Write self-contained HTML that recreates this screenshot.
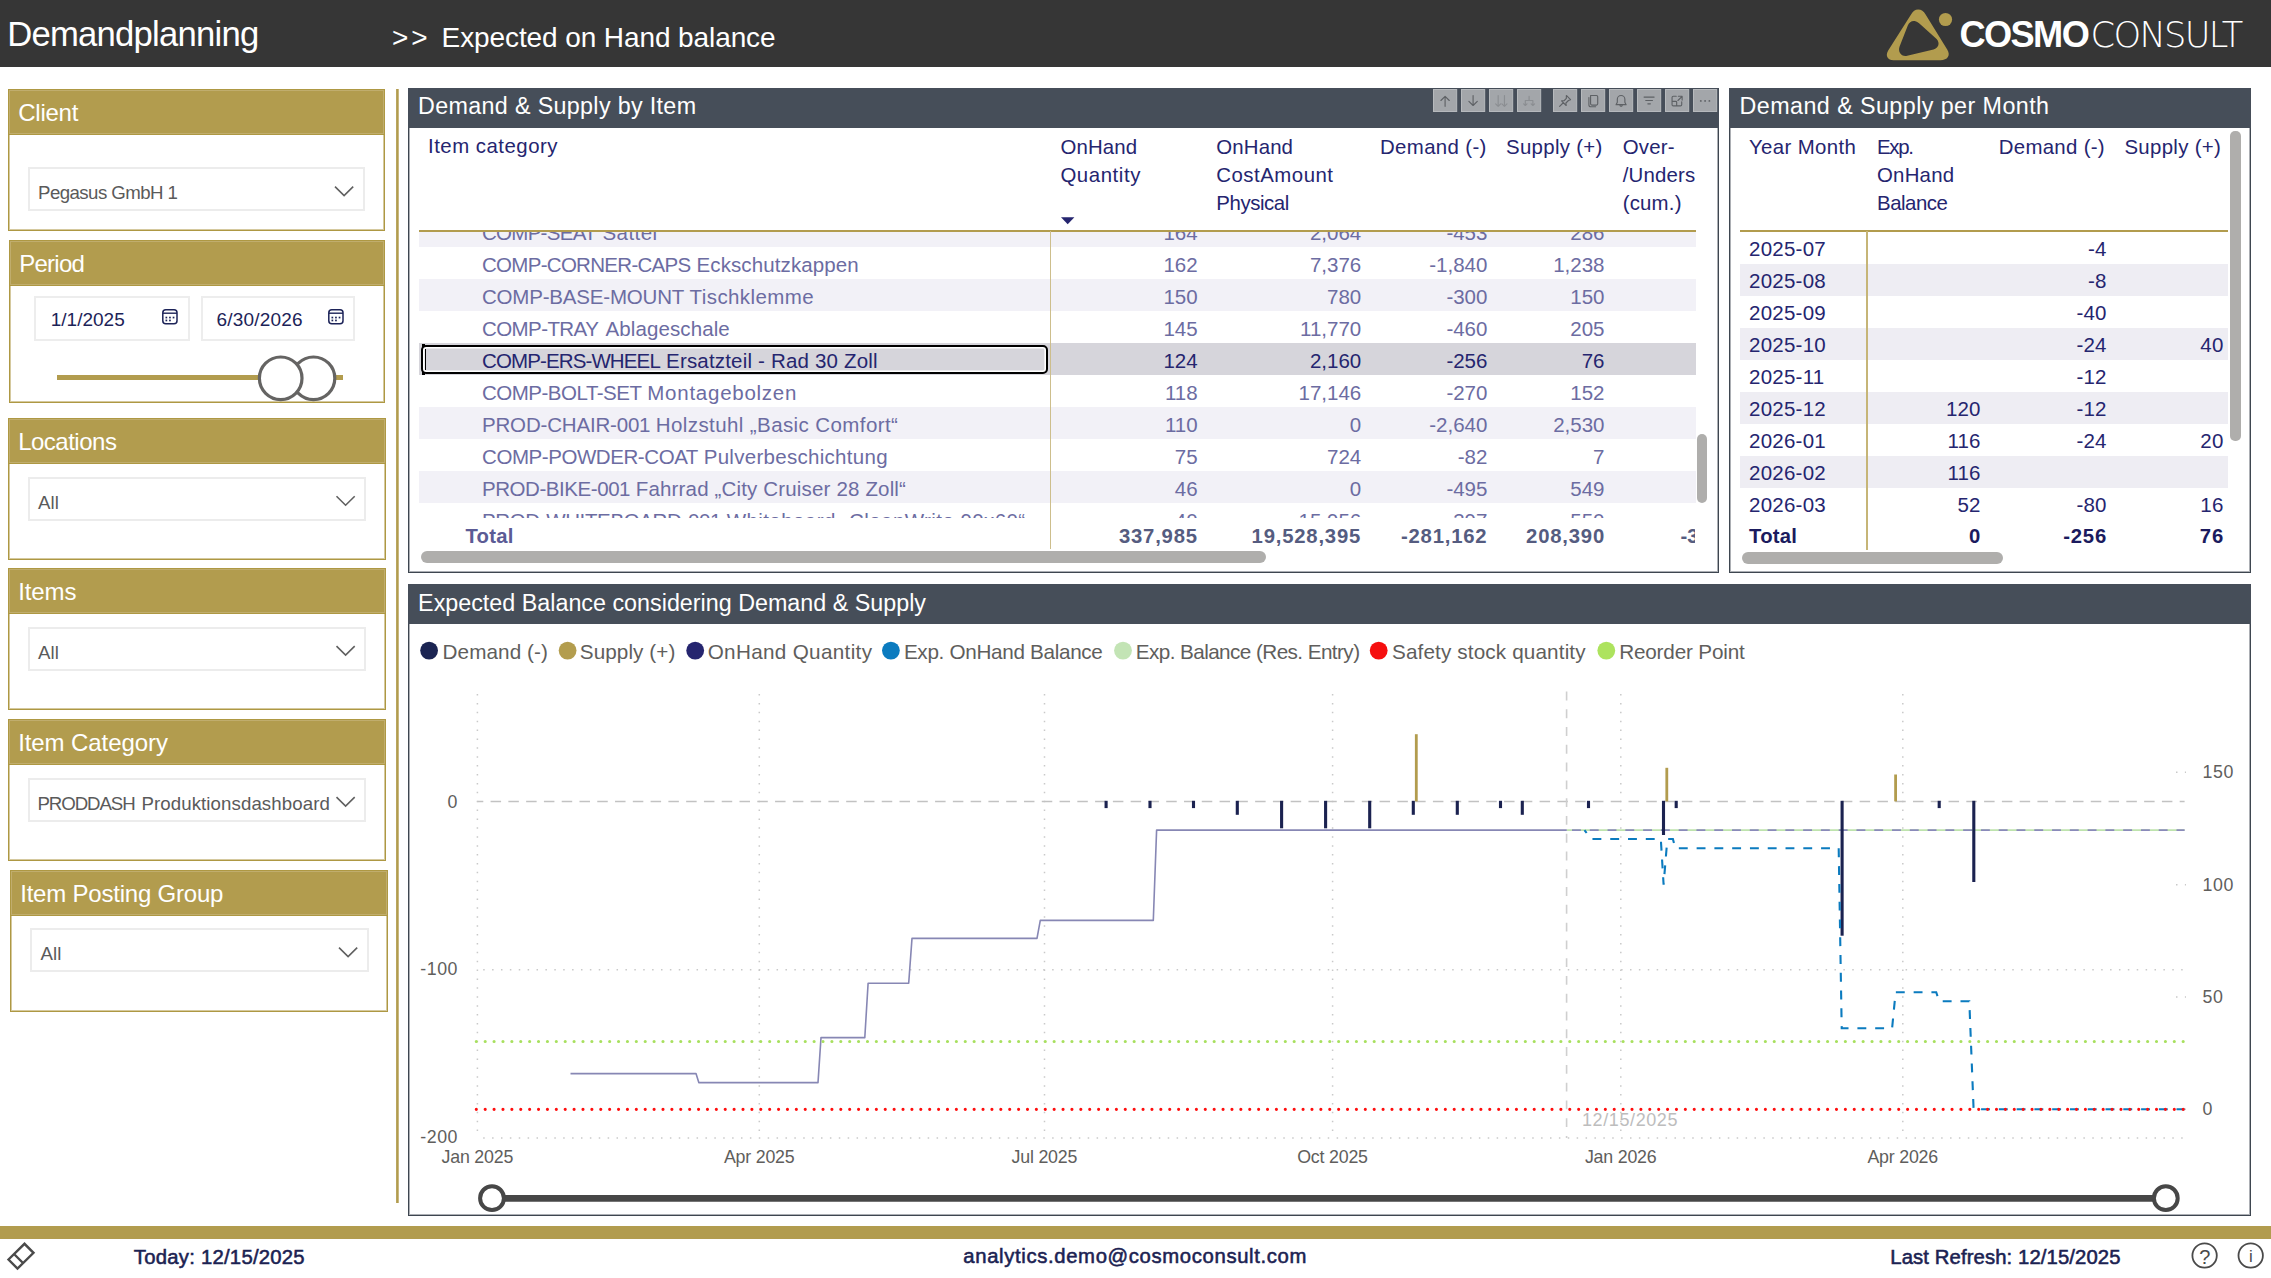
<!DOCTYPE html>
<html><head><meta charset="utf-8"><title>Demandplanning - Expected on Hand balance</title>
<style>
html,body{margin:0;padding:0;background:#fff;}
body{width:2271px;height:1278px;position:relative;overflow:hidden;font-family:"Liberation Sans",sans-serif;}
.t{position:absolute;white-space:nowrap;}
.b{position:absolute;box-sizing:border-box;}
svg{position:absolute;overflow:visible;}
</style></head><body>

<div class="b" style="left:0px;top:0px;width:2271px;height:66.5px;background:#363636;"></div>
<div class="t" style="top:16.90px;font-size:34.67px;line-height:34.67px;color:#fff;letter-spacing:-0.781px;left:7.30px;">Demandplanning</div>
<div class="t" style="top:23.80px;font-size:28px;line-height:28px;color:#fff;letter-spacing:3.000px;left:392.00px;">&gt;&gt;</div>
<div class="t" style="top:23.80px;font-size:28px;line-height:28px;color:#fff;letter-spacing:-0.098px;left:441.60px;">Expected on Hand balance</div>
<div class="b" style="left:8px;top:89px;width:376.5px;height:141.5px;border:1px solid #AE9843;box-shadow:inset 0 0 0 1px rgba(178,156,78,0.55);background:#fff;"></div>
<div class="b" style="left:8px;top:89px;width:376.5px;height:46px;background:#B29C4E;border:1px solid #AE9843;box-shadow:inset 0 0 0 1px rgba(255,255,255,0.18);"></div>
<div class="t" style="top:100.98px;font-size:24px;line-height:24px;color:#fff;letter-spacing:-0.232px;left:18.20px;">Client</div>
<div class="b" style="left:27.5px;top:167px;width:337px;height:44px;border:2px solid #ECECEC;background:#fff;"></div>
<div class="t" style="top:184.20px;font-size:18.67px;line-height:18.67px;color:#5A5A5A;letter-spacing:-0.566px;left:38.00px;">Pegasus GmbH 1</div>
<svg style="left:0;top:0" width="1" height="1"><path d="M335.0,186.6 L344.1,195.6 L353.20000000000005,186.6" fill="none" stroke="#606060" stroke-width="1.6"/></svg>
<div class="b" style="left:9px;top:240px;width:376px;height:163px;border:1px solid #AE9843;box-shadow:inset 0 0 0 1px rgba(178,156,78,0.55);background:#fff;"></div>
<div class="b" style="left:9px;top:240px;width:376px;height:46px;background:#B29C4E;border:1px solid #AE9843;box-shadow:inset 0 0 0 1px rgba(255,255,255,0.18);"></div>
<div class="t" style="top:251.98px;font-size:24px;line-height:24px;color:#fff;letter-spacing:-0.736px;left:19.20px;">Period</div>
<div class="b" style="left:34px;top:295.5px;width:155.5px;height:45px;border:2px solid #EDEDED;background:#fff;"></div>
<div class="b" style="left:200.5px;top:295.5px;width:154px;height:45px;border:2px solid #EDEDED;background:#fff;"></div>
<div class="t" style="top:310.12px;font-size:19px;line-height:19px;color:#1C2358;letter-spacing:0.006px;left:50.75px;">1/1/2025</div>
<div class="t" style="top:310.12px;font-size:19px;line-height:19px;color:#1C2358;letter-spacing:0.184px;left:216.50px;">6/30/2026</div>
<svg style="left:162px;top:308.6px" width="16" height="16" viewBox="0 0 16 16"><rect x="0.8" y="0.8" width="14.2" height="13.9" rx="3" fill="none" stroke="#1C2358" stroke-width="1.5"/><line x1="1" y1="4.2" x2="15" y2="4.2" stroke="#1C2358" stroke-width="1.4"/><rect x="3.5" y="7.7" width="1.7" height="1.7" fill="#1C2358"/><rect x="7.1" y="7.7" width="1.7" height="1.7" fill="#1C2358"/><rect x="10.7" y="7.7" width="1.7" height="1.7" fill="#1C2358"/><rect x="3.5" y="10.6" width="1.7" height="1.7" fill="#1C2358"/><rect x="7.1" y="10.6" width="1.7" height="1.7" fill="#1C2358"/></svg>
<svg style="left:328.1px;top:308.6px" width="16" height="16" viewBox="0 0 16 16"><rect x="0.8" y="0.8" width="14.2" height="13.9" rx="3" fill="none" stroke="#1C2358" stroke-width="1.5"/><line x1="1" y1="4.2" x2="15" y2="4.2" stroke="#1C2358" stroke-width="1.4"/><rect x="3.5" y="7.7" width="1.7" height="1.7" fill="#1C2358"/><rect x="7.1" y="7.7" width="1.7" height="1.7" fill="#1C2358"/><rect x="10.7" y="7.7" width="1.7" height="1.7" fill="#1C2358"/><rect x="3.5" y="10.6" width="1.7" height="1.7" fill="#1C2358"/><rect x="7.1" y="10.6" width="1.7" height="1.7" fill="#1C2358"/></svg>
<div class="b" style="left:56.75px;top:374.6px;width:286px;height:5.2px;background:#B29C4E;"></div>
<svg style="left:0;top:0" width="1" height="1"><circle cx="313.5" cy="378.3" r="21.3" fill="#fff" stroke="#656463" stroke-width="3.2"/><circle cx="280.7" cy="378.3" r="21.3" fill="#fff" stroke="#656463" stroke-width="3.2"/></svg>
<div class="b" style="left:8px;top:418px;width:377.5px;height:141.5px;border:1px solid #AE9843;box-shadow:inset 0 0 0 1px rgba(178,156,78,0.55);background:#fff;"></div>
<div class="b" style="left:8px;top:418px;width:377.5px;height:46px;background:#B29C4E;border:1px solid #AE9843;box-shadow:inset 0 0 0 1px rgba(255,255,255,0.18);"></div>
<div class="t" style="top:429.98px;font-size:24px;line-height:24px;color:#fff;letter-spacing:-0.505px;left:18.20px;">Locations</div>
<div class="b" style="left:27.5px;top:476.6px;width:338.5px;height:44.3px;border:2px solid #ECECEC;background:#fff;"></div>
<div class="t" style="top:493.80px;font-size:18.67px;line-height:18.67px;color:#5A5A5A;letter-spacing:0.125px;left:38.00px;">All</div>
<svg style="left:0;top:0" width="1" height="1"><path d="M336.5,496.20000000000005 L345.6,505.20000000000005 L354.70000000000005,496.20000000000005" fill="none" stroke="#606060" stroke-width="1.6"/></svg>
<div class="b" style="left:8px;top:568px;width:377.5px;height:141.6px;border:1px solid #AE9843;box-shadow:inset 0 0 0 1px rgba(178,156,78,0.55);background:#fff;"></div>
<div class="b" style="left:8px;top:568px;width:377.5px;height:46px;background:#B29C4E;border:1px solid #AE9843;box-shadow:inset 0 0 0 1px rgba(255,255,255,0.18);"></div>
<div class="t" style="top:579.98px;font-size:24px;line-height:24px;color:#fff;letter-spacing:-0.119px;left:18.20px;">Items</div>
<div class="b" style="left:27.5px;top:626.5px;width:338.5px;height:44.4px;border:2px solid #ECECEC;background:#fff;"></div>
<div class="t" style="top:643.70px;font-size:18.67px;line-height:18.67px;color:#5A5A5A;letter-spacing:0.125px;left:38.00px;">All</div>
<svg style="left:0;top:0" width="1" height="1"><path d="M336.5,646.1 L345.6,655.1 L354.70000000000005,646.1" fill="none" stroke="#606060" stroke-width="1.6"/></svg>
<div class="b" style="left:8px;top:719px;width:377.5px;height:141.6px;border:1px solid #AE9843;box-shadow:inset 0 0 0 1px rgba(178,156,78,0.55);background:#fff;"></div>
<div class="b" style="left:8px;top:719px;width:377.5px;height:46px;background:#B29C4E;border:1px solid #AE9843;box-shadow:inset 0 0 0 1px rgba(255,255,255,0.18);"></div>
<div class="t" style="top:730.98px;font-size:24px;line-height:24px;color:#fff;letter-spacing:-0.086px;left:18.20px;">Item Category</div>
<div class="b" style="left:27.5px;top:777.5px;width:338.5px;height:44.4px;border:2px solid #ECECEC;background:#fff;"></div>
<div class="t" style="top:794.90px;font-size:18.67px;line-height:18.67px;color:#5A5A5A;letter-spacing:-1.074px;left:37.50px;">PRODDASH</div>
<div class="t" style="top:794.90px;font-size:18.67px;line-height:18.67px;color:#5A5A5A;letter-spacing:0.093px;left:141.40px;">Produktionsdashboard</div>
<svg style="left:0;top:0" width="1" height="1"><path d="M336.5,797.1 L345.6,806.1 L354.70000000000005,797.1" fill="none" stroke="#606060" stroke-width="1.6"/></svg>
<div class="b" style="left:10px;top:870px;width:378px;height:141.6px;border:1px solid #AE9843;box-shadow:inset 0 0 0 1px rgba(178,156,78,0.55);background:#fff;"></div>
<div class="b" style="left:10px;top:870px;width:378px;height:46px;background:#B29C4E;border:1px solid #AE9843;box-shadow:inset 0 0 0 1px rgba(255,255,255,0.18);"></div>
<div class="t" style="top:881.98px;font-size:24px;line-height:24px;color:#fff;letter-spacing:-0.210px;left:20.20px;">Item Posting Group</div>
<div class="b" style="left:30px;top:928px;width:338.5px;height:44.4px;border:2px solid #ECECEC;background:#fff;"></div>
<div class="t" style="top:945.20px;font-size:18.67px;line-height:18.67px;color:#5A5A5A;letter-spacing:0.125px;left:40.50px;">All</div>
<svg style="left:0;top:0" width="1" height="1"><path d="M339.0,947.6 L348.1,956.6 L357.20000000000005,947.6" fill="none" stroke="#606060" stroke-width="1.6"/></svg>
<svg style="left:0;top:0" width="1" height="1"><rect x="396.1" y="89" width="2.6" height="1114" fill="#B29C4E"/></svg>
<div class="b" style="left:407.5px;top:88.3px;width:1311px;height:485px;border:1px solid #3E4650;box-shadow:inset 0 0 0 1px rgba(70,78,89,0.45);background:#fff;"></div>
<div class="b" style="left:407.5px;top:88.3px;width:1311px;height:40px;background:#464E59;"></div>
<div class="t" style="top:95.48px;font-size:23.3px;line-height:23.3px;color:#fff;letter-spacing:0.333px;left:418.10px;">Demand &amp; Supply by Item</div>
<div class="b" style="left:1729px;top:88.3px;width:522.3px;height:485px;border:1px solid #3E4650;box-shadow:inset 0 0 0 1px rgba(70,78,89,0.45);background:#fff;"></div>
<div class="b" style="left:1729px;top:88.3px;width:522.3px;height:40px;background:#464E59;"></div>
<div class="t" style="top:95.48px;font-size:23.3px;line-height:23.3px;color:#fff;letter-spacing:0.430px;left:1739.60px;">Demand &amp; Supply per Month</div>
<div class="b" style="left:407.5px;top:584.3px;width:1843.8px;height:632px;border:1px solid #3E4650;box-shadow:inset 0 0 0 1px rgba(70,78,89,0.45);background:#fff;"></div>
<div class="b" style="left:407.5px;top:584.3px;width:1843.8px;height:40px;background:#464E59;"></div>
<div class="t" style="top:592.08px;font-size:23.3px;line-height:23.3px;color:#fff;letter-spacing:0.006px;left:418.10px;">Expected Balance considering Demand &amp; Supply</div>
<svg style="left:1433px;top:89.1px" width="24.2" height="23" viewBox="0 0 24.2 23"><rect x="0.5" y="0.5" width="23.2" height="22" fill="#A3A6AA" stroke="#B7BABD" stroke-width="1"/><g transform="translate(12.1,11.9) scale(0.84) translate(-12,-12)"><path fill="none" stroke="#5E6165" stroke-width="1.35" stroke-linecap="round" stroke-linejoin="round" d="M12 18.5V6.5M7 11.5l5-5 5 5"/></g></svg>
<svg style="left:1460.9px;top:89.1px" width="24.2" height="23" viewBox="0 0 24.2 23"><rect x="0.5" y="0.5" width="23.2" height="22" fill="#A3A6AA" stroke="#B7BABD" stroke-width="1"/><g transform="translate(12.1,11.9) scale(0.84) translate(-12,-12)"><path fill="none" stroke="#5E6165" stroke-width="1.35" stroke-linecap="round" stroke-linejoin="round" d="M12 5.5v12M7 12.5l5 5 5-5"/></g></svg>
<svg style="left:1488.8px;top:89.1px" width="24.2" height="23" viewBox="0 0 24.2 23"><rect x="0.5" y="0.5" width="23.2" height="22" fill="#A3A6AA" stroke="#B7BABD" stroke-width="1"/><g transform="translate(12.1,11.9) scale(0.84) translate(-12,-12)"><path fill="none" stroke="#8B8E92" stroke-width="1.35" stroke-linecap="round" stroke-linejoin="round" d="M8.5 5.5v13M5.5 15.5l3 3 3-3M16 5.5v13M13 15.5l3 3 3-3"/></g></svg>
<svg style="left:1516.8px;top:89.1px" width="24.2" height="23" viewBox="0 0 24.2 23"><rect x="0.5" y="0.5" width="23.2" height="22" fill="#A3A6AA" stroke="#B7BABD" stroke-width="1"/><g transform="translate(12.1,11.9) scale(0.84) translate(-12,-12)"><path fill="none" stroke="#8B8E92" stroke-width="1.35" stroke-linecap="round" stroke-linejoin="round" d="M12 6.5v5M7.5 17.5v-6h9v6M5.5 15.5l2 2 2-2M14.5 15.5l2 2 2-2"/></g></svg>
<svg style="left:1552.8px;top:89.1px" width="24.2" height="23" viewBox="0 0 24.2 23"><rect x="0.5" y="0.5" width="23.2" height="22" fill="#A3A6AA" stroke="#B7BABD" stroke-width="1"/><g transform="translate(12.1,11.9) scale(0.84) translate(-12,-12)"><path fill="none" stroke="#5E6165" stroke-width="1.35" stroke-linecap="round" stroke-linejoin="round" d="M13.5 5.5l5 5-2.5 1-3 3 .3 3-5.5-5.5 3-.2 2.7-2.8zM9.8 14.2l-4.3 4.3"/></g></svg>
<svg style="left:1580.8px;top:89.1px" width="24.2" height="23" viewBox="0 0 24.2 23"><rect x="0.5" y="0.5" width="23.2" height="22" fill="#A3A6AA" stroke="#B7BABD" stroke-width="1"/><g transform="translate(12.1,11.9) scale(0.84) translate(-12,-12)"><path fill="none" stroke="#5E6165" stroke-width="1.35" stroke-linecap="round" stroke-linejoin="round" d="M9 5.5h7a1.5 1.5 0 0 1 1.500 1.5v8.5a1.500 1.500 0 0 1 -1.500 1.500h-5.500a1.500 1.500 0 0 1 -1.500 -1.500zM7 8v8.500a2.500 2.500 0 0 0 2.500 2.500h5.500"/></g></svg>
<svg style="left:1608.8px;top:89.1px" width="24.2" height="23" viewBox="0 0 24.2 23"><rect x="0.5" y="0.5" width="23.2" height="22" fill="#A3A6AA" stroke="#B7BABD" stroke-width="1"/><g transform="translate(12.1,11.9) scale(0.84) translate(-12,-12)"><path fill="none" stroke="#5E6165" stroke-width="1.35" stroke-linecap="round" stroke-linejoin="round" d="M12 5.5a4.500 4.500 0 0 1 4.500 4.500v3.500l1.500 3h-12l1.500-3v-3.500a4.500 4.500 0 0 1 4.500-4.500zM10.500 17a1.500 1.500 0 0 0 3 0"/></g></svg>
<svg style="left:1636.8px;top:89.1px" width="24.2" height="23" viewBox="0 0 24.2 23"><rect x="0.5" y="0.5" width="23.2" height="22" fill="#A3A6AA" stroke="#B7BABD" stroke-width="1"/><g transform="translate(12.1,11.9) scale(0.84) translate(-12,-12)"><path fill="none" stroke="#5E6165" stroke-width="1.35" stroke-linecap="round" stroke-linejoin="round" d="M6 7.500h12M8 11.500h8M10.500 15.500h3"/></g></svg>
<svg style="left:1664.7px;top:89.1px" width="24.2" height="23" viewBox="0 0 24.2 23"><rect x="0.5" y="0.5" width="23.2" height="22" fill="#A3A6AA" stroke="#B7BABD" stroke-width="1"/><g transform="translate(12.1,11.9) scale(0.84) translate(-12,-12)"><path fill="none" stroke="#5E6165" stroke-width="1.35" stroke-linecap="round" stroke-linejoin="round" d="M11 6.500h-3.500a1.500 1.500 0 0 0 -1.500 1.500v8.500a1.500 1.500 0 0 0 1.500 1.500h8.500a1.500 1.500 0 0 0 1.500-1.500v-3.500M13.500 6.500h4.500v4.500M18 6.500l-5 5M6 12.500h4.500a1 1 0 0 1 1 1v4.500"/></g></svg>
<svg style="left:1692.7px;top:89.1px" width="24.2" height="23" viewBox="0 0 24.2 23"><rect x="0.5" y="0.5" width="23.2" height="22" fill="#A3A6AA" stroke="#B7BABD" stroke-width="1"/><g transform="translate(12.1,11.9) scale(0.84) translate(-12,-12)"><circle cx="6.9" cy="12" r="1.1" fill="#5E6165"/><circle cx="12" cy="12" r="1.1" fill="#5E6165"/><circle cx="17.1" cy="12" r="1.1" fill="#5E6165"/></g></svg>
<div class="t" style="top:135.83px;font-size:20.4px;line-height:20.4px;color:#25256F;letter-spacing:0.493px;left:428.00px;">Item category</div>
<div class="t" style="top:136.63px;font-size:20.4px;line-height:20.4px;color:#25256F;letter-spacing:0.143px;left:1060.40px;">OnHand</div>
<div class="t" style="top:164.83px;font-size:20.4px;line-height:20.4px;color:#25256F;letter-spacing:0.575px;left:1060.40px;">Quantity</div>
<div class="t" style="top:136.63px;font-size:20.4px;line-height:20.4px;color:#25256F;letter-spacing:0.143px;left:1216.30px;">OnHand</div>
<div class="t" style="top:164.83px;font-size:20.4px;line-height:20.4px;color:#25256F;letter-spacing:0.505px;left:1216.30px;">CostAmount</div>
<div class="t" style="top:193.03px;font-size:20.4px;line-height:20.4px;color:#25256F;letter-spacing:-0.424px;left:1216.30px;">Physical</div>
<div class="t" style="top:136.63px;font-size:20.4px;line-height:20.4px;color:#25256F;letter-spacing:0.360px;left:1380.00px;">Demand (-)</div>
<div class="t" style="top:136.63px;font-size:20.4px;line-height:20.4px;color:#25256F;letter-spacing:0.317px;left:1506.00px;">Supply (+)</div>
<div class="b" style="left:1615px;top:130px;width:80.3px;height:99px;overflow:hidden;">
<div class="t" style="left:7.7px;top:6.63px;font-size:20.4px;line-height:20.4px;color:#25256F;letter-spacing:0.2px;">Over-</div>
<div class="t" style="left:7.7px;top:34.83px;font-size:20.4px;line-height:20.4px;color:#25256F;letter-spacing:0.2px;">/Understock</div>
<div class="t" style="left:7.7px;top:63.03px;font-size:20.4px;line-height:20.4px;color:#25256F;letter-spacing:0.2px;">(cum.)</div>
</div>
<svg style="left:1060.6px;top:217px" width="14" height="8"><path d="M0,0.3 H13.4 L6.7,7.2 Z" fill="#25256F"/></svg>
<div class="b" style="left:418.5px;top:231px;width:1277px;height:286.5px;overflow:hidden;">
<div class="b" style="left:0;top:-15.900000000000006px;width:1277px;height:32px;background:#F2F1F7;"></div>
<div class="t" style="left:63.50px;top:-8.25px;font-size:20.5px;line-height:20.5px;color:#6C6CA2;letter-spacing:-0.719px;">COMP-SEAT</div>
<div class="t" style="left:184.00px;top:-8.25px;font-size:20.5px;line-height:20.5px;color:#6C6CA2;letter-spacing:0.436px;">Sattel</div>
<div class="t" style="right:497.90px;top:-8.25px;font-size:20.5px;line-height:20.5px;color:#6C6CA2;letter-spacing:0.0px;">164</div>
<div class="t" style="right:334.30px;top:-8.25px;font-size:20.5px;line-height:20.5px;color:#6C6CA2;letter-spacing:0.0px;">2,064</div>
<div class="t" style="right:208.10px;top:-8.25px;font-size:20.5px;line-height:20.5px;color:#6C6CA2;letter-spacing:0.0px;">-453</div>
<div class="t" style="right:91.00px;top:-8.25px;font-size:20.5px;line-height:20.5px;color:#6C6CA2;letter-spacing:0.0px;">286</div>
<div class="b" style="left:0;top:16.099999999999994px;width:1277px;height:32px;background:#fff;"></div>
<div class="t" style="left:63.50px;top:23.75px;font-size:20.5px;line-height:20.5px;color:#6C6CA2;letter-spacing:-0.708px;">COMP-CORNER-CAPS</div>
<div class="t" style="left:278.00px;top:23.75px;font-size:20.5px;line-height:20.5px;color:#6C6CA2;letter-spacing:0.109px;">Eckschutzkappen</div>
<div class="t" style="right:497.90px;top:23.75px;font-size:20.5px;line-height:20.5px;color:#6C6CA2;letter-spacing:0.0px;">162</div>
<div class="t" style="right:334.30px;top:23.75px;font-size:20.5px;line-height:20.5px;color:#6C6CA2;letter-spacing:0.0px;">7,376</div>
<div class="t" style="right:208.10px;top:23.75px;font-size:20.5px;line-height:20.5px;color:#6C6CA2;letter-spacing:0.0px;">-1,840</div>
<div class="t" style="right:91.00px;top:23.75px;font-size:20.5px;line-height:20.5px;color:#6C6CA2;letter-spacing:0.0px;">1,238</div>
<div class="b" style="left:0;top:48.099999999999994px;width:1277px;height:32px;background:#F2F1F7;"></div>
<div class="t" style="left:63.50px;top:55.75px;font-size:20.5px;line-height:20.5px;color:#6C6CA2;letter-spacing:-0.193px;">COMP-BASE-MOUNT</div>
<div class="t" style="left:271.10px;top:55.75px;font-size:20.5px;line-height:20.5px;color:#6C6CA2;letter-spacing:0.412px;">Tischklemme</div>
<div class="t" style="right:497.90px;top:55.75px;font-size:20.5px;line-height:20.5px;color:#6C6CA2;letter-spacing:0.0px;">150</div>
<div class="t" style="right:334.30px;top:55.75px;font-size:20.5px;line-height:20.5px;color:#6C6CA2;letter-spacing:0.0px;">780</div>
<div class="t" style="right:208.10px;top:55.75px;font-size:20.5px;line-height:20.5px;color:#6C6CA2;letter-spacing:0.0px;">-300</div>
<div class="t" style="right:91.00px;top:55.75px;font-size:20.5px;line-height:20.5px;color:#6C6CA2;letter-spacing:0.0px;">150</div>
<div class="b" style="left:0;top:80.1px;width:1277px;height:32px;background:#fff;"></div>
<div class="t" style="left:63.50px;top:87.75px;font-size:20.5px;line-height:20.5px;color:#6C6CA2;letter-spacing:-0.585px;">COMP-TRAY</div>
<div class="t" style="left:187.00px;top:87.75px;font-size:20.5px;line-height:20.5px;color:#6C6CA2;letter-spacing:0.101px;">Ablageschale</div>
<div class="t" style="right:497.90px;top:87.75px;font-size:20.5px;line-height:20.5px;color:#6C6CA2;letter-spacing:0.0px;">145</div>
<div class="t" style="right:334.30px;top:87.75px;font-size:20.5px;line-height:20.5px;color:#6C6CA2;letter-spacing:0.0px;">11,770</div>
<div class="t" style="right:208.10px;top:87.75px;font-size:20.5px;line-height:20.5px;color:#6C6CA2;letter-spacing:0.0px;">-460</div>
<div class="t" style="right:91.00px;top:87.75px;font-size:20.5px;line-height:20.5px;color:#6C6CA2;letter-spacing:0.0px;">205</div>
<div class="b" style="left:0;top:112.1px;width:1277px;height:32px;background:#D6D5DB;"></div>
<div class="t" style="left:63.50px;top:119.75px;font-size:20.5px;line-height:20.5px;color:#25256F;letter-spacing:-0.878px;">COMP-ERS-WHEEL</div>
<div class="t" style="left:247.60px;top:119.75px;font-size:20.5px;line-height:20.5px;color:#25256F;letter-spacing:0.176px;">Ersatzteil - Rad 30 Zoll</div>
<div class="t" style="right:497.90px;top:119.75px;font-size:20.5px;line-height:20.5px;color:#25256F;letter-spacing:0.0px;">124</div>
<div class="t" style="right:334.30px;top:119.75px;font-size:20.5px;line-height:20.5px;color:#25256F;letter-spacing:0.0px;">2,160</div>
<div class="t" style="right:208.10px;top:119.75px;font-size:20.5px;line-height:20.5px;color:#25256F;letter-spacing:0.0px;">-256</div>
<div class="t" style="right:91.00px;top:119.75px;font-size:20.5px;line-height:20.5px;color:#25256F;letter-spacing:0.0px;">76</div>
<div class="b" style="left:0;top:144.1px;width:1277px;height:32px;background:#fff;"></div>
<div class="t" style="left:63.50px;top:151.75px;font-size:20.5px;line-height:20.5px;color:#6C6CA2;letter-spacing:-0.493px;">COMP-BOLT-SET</div>
<div class="t" style="left:228.80px;top:151.75px;font-size:20.5px;line-height:20.5px;color:#6C6CA2;letter-spacing:0.742px;">Montagebolzen</div>
<div class="t" style="right:497.90px;top:151.75px;font-size:20.5px;line-height:20.5px;color:#6C6CA2;letter-spacing:0.0px;">118</div>
<div class="t" style="right:334.30px;top:151.75px;font-size:20.5px;line-height:20.5px;color:#6C6CA2;letter-spacing:0.0px;">17,146</div>
<div class="t" style="right:208.10px;top:151.75px;font-size:20.5px;line-height:20.5px;color:#6C6CA2;letter-spacing:0.0px;">-270</div>
<div class="t" style="right:91.00px;top:151.75px;font-size:20.5px;line-height:20.5px;color:#6C6CA2;letter-spacing:0.0px;">152</div>
<div class="b" style="left:0;top:176.1px;width:1277px;height:32px;background:#F2F1F7;"></div>
<div class="t" style="left:63.50px;top:183.75px;font-size:20.5px;line-height:20.5px;color:#6C6CA2;letter-spacing:-0.182px;">PROD-CHAIR-001</div>
<div class="t" style="left:237.30px;top:183.75px;font-size:20.5px;line-height:20.5px;color:#6C6CA2;letter-spacing:0.404px;">Holzstuhl „Basic Comfort“</div>
<div class="t" style="right:497.90px;top:183.75px;font-size:20.5px;line-height:20.5px;color:#6C6CA2;letter-spacing:0.0px;">110</div>
<div class="t" style="right:334.30px;top:183.75px;font-size:20.5px;line-height:20.5px;color:#6C6CA2;letter-spacing:0.0px;">0</div>
<div class="t" style="right:208.10px;top:183.75px;font-size:20.5px;line-height:20.5px;color:#6C6CA2;letter-spacing:0.0px;">-2,640</div>
<div class="t" style="right:91.00px;top:183.75px;font-size:20.5px;line-height:20.5px;color:#6C6CA2;letter-spacing:0.0px;">2,530</div>
<div class="b" style="left:0;top:208.1px;width:1277px;height:32px;background:#fff;"></div>
<div class="t" style="left:63.50px;top:215.75px;font-size:20.5px;line-height:20.5px;color:#6C6CA2;letter-spacing:-0.429px;">COMP-POWDER-COAT</div>
<div class="t" style="left:285.20px;top:215.75px;font-size:20.5px;line-height:20.5px;color:#6C6CA2;letter-spacing:0.293px;">Pulverbeschichtung</div>
<div class="t" style="right:497.90px;top:215.75px;font-size:20.5px;line-height:20.5px;color:#6C6CA2;letter-spacing:0.0px;">75</div>
<div class="t" style="right:334.30px;top:215.75px;font-size:20.5px;line-height:20.5px;color:#6C6CA2;letter-spacing:0.0px;">724</div>
<div class="t" style="right:208.10px;top:215.75px;font-size:20.5px;line-height:20.5px;color:#6C6CA2;letter-spacing:0.0px;">-82</div>
<div class="t" style="right:91.00px;top:215.75px;font-size:20.5px;line-height:20.5px;color:#6C6CA2;letter-spacing:0.0px;">7</div>
<div class="b" style="left:0;top:240.1px;width:1277px;height:32px;background:#F2F1F7;"></div>
<div class="t" style="left:63.50px;top:247.75px;font-size:20.5px;line-height:20.5px;color:#6C6CA2;letter-spacing:-0.442px;">PROD-BIKE-001</div>
<div class="t" style="left:217.30px;top:247.75px;font-size:20.5px;line-height:20.5px;color:#6C6CA2;letter-spacing:0.161px;">Fahrrad „City Cruiser 28 Zoll“</div>
<div class="t" style="right:497.90px;top:247.75px;font-size:20.5px;line-height:20.5px;color:#6C6CA2;letter-spacing:0.0px;">46</div>
<div class="t" style="right:334.30px;top:247.75px;font-size:20.5px;line-height:20.5px;color:#6C6CA2;letter-spacing:0.0px;">0</div>
<div class="t" style="right:208.10px;top:247.75px;font-size:20.5px;line-height:20.5px;color:#6C6CA2;letter-spacing:0.0px;">-495</div>
<div class="t" style="right:91.00px;top:247.75px;font-size:20.5px;line-height:20.5px;color:#6C6CA2;letter-spacing:0.0px;">549</div>
<div class="b" style="left:0;top:272.1px;width:1277px;height:32px;background:#fff;"></div>
<div class="t" style="left:63.50px;top:279.75px;font-size:20.5px;line-height:20.5px;color:#6C6CA2;letter-spacing:-0.369px;">PROD-WHITEBOARD-001</div>
<div class="t" style="left:308.20px;top:279.75px;font-size:20.5px;line-height:20.5px;color:#6C6CA2;letter-spacing:0.419px;">Whiteboard „CleanWrite 90x60“</div>
<div class="t" style="right:497.90px;top:279.75px;font-size:20.5px;line-height:20.5px;color:#6C6CA2;letter-spacing:0.0px;">40</div>
<div class="t" style="right:334.30px;top:279.75px;font-size:20.5px;line-height:20.5px;color:#6C6CA2;letter-spacing:0.0px;">15,956</div>
<div class="t" style="right:208.10px;top:279.75px;font-size:20.5px;line-height:20.5px;color:#6C6CA2;letter-spacing:0.0px;">-397</div>
<div class="t" style="right:91.00px;top:279.75px;font-size:20.5px;line-height:20.5px;color:#6C6CA2;letter-spacing:0.0px;">550</div>
</div>
<div class="b" style="left:421px;top:345px;width:627px;height:29px;border:2px solid #000;border-radius:5px;box-shadow:inset 0 0 0 1.6px #fff;"></div>
<div class="b" style="left:422px;top:344px;width:3px;height:3px;background:#000;"></div>
<div class="b" style="left:422px;top:372px;width:3px;height:3px;background:#000;"></div>
<div class="b" style="left:425px;top:349px;width:1px;height:21px;background:#000;"></div>
<div class="b" style="left:418.5px;top:230px;width:1277px;height:2px;background:#B29C4E;"></div>
<div class="b" style="left:1049.6px;top:231px;width:1.6px;height:318px;background:#CDBE8C;"></div>
<div class="t" style="top:525.52px;font-size:20.3px;line-height:20.3px;color:#5B5B95;letter-spacing:0.254px;font-weight:bold;left:465.40px;">Total</div>
<div class="t" style="top:525.52px;font-size:20.3px;line-height:20.3px;color:#555C80;letter-spacing:0.800px;font-weight:bold;right:1073.20px;">337,985</div>
<div class="t" style="top:525.52px;font-size:20.3px;line-height:20.3px;color:#555C80;letter-spacing:0.800px;font-weight:bold;right:909.90px;">19,528,395</div>
<div class="t" style="top:525.52px;font-size:20.3px;line-height:20.3px;color:#555C80;letter-spacing:0.800px;font-weight:bold;right:783.60px;">-281,162</div>
<div class="t" style="top:525.52px;font-size:20.3px;line-height:20.3px;color:#555C80;letter-spacing:0.800px;font-weight:bold;right:666.00px;">208,390</div>
<div class="b" style="left:1615px;top:520px;width:80.3px;height:30px;overflow:hidden;"><div class="t" style="left:65.5px;top:5.52px;font-size:20.3px;line-height:20.3px;font-weight:bold;color:#555C80;">-3,562</div></div>
<div class="b" style="left:421px;top:551px;width:845px;height:12px;background:#AFAEAC;border-radius:6px;"></div>
<div class="b" style="left:1697.4px;top:434.4px;width:10px;height:68.5px;background:#AFAEAC;border-radius:5px;"></div>
<div class="t" style="top:136.63px;font-size:20.4px;line-height:20.4px;color:#25256F;letter-spacing:0.379px;left:1749.00px;">Year Month</div>
<div class="t" style="top:136.63px;font-size:20.4px;line-height:20.4px;color:#25256F;letter-spacing:-1.274px;left:1877.00px;">Exp.</div>
<div class="t" style="top:164.78px;font-size:20.4px;line-height:20.4px;color:#25256F;letter-spacing:0.223px;left:1877.00px;">OnHand</div>
<div class="t" style="top:192.93px;font-size:20.4px;line-height:20.4px;color:#25256F;letter-spacing:-0.471px;left:1877.00px;">Balance</div>
<div class="t" style="top:136.63px;font-size:20.4px;line-height:20.4px;color:#25256F;letter-spacing:0.316px;left:1998.70px;">Demand (-)</div>
<div class="t" style="top:136.63px;font-size:20.4px;line-height:20.4px;color:#25256F;letter-spacing:0.328px;left:2124.40px;">Supply (+)</div>
<div class="b" style="left:1739.8px;top:232px;width:488.2px;height:287px;overflow:hidden;">
<div class="b" style="left:0;top:0px;width:488.2px;height:32px;background:#fff;"></div>
<div class="t" style="left:9.20px;top:7.15px;font-size:20.5px;line-height:20.5px;color:#25256F;letter-spacing:0.25px;">2025-07</div>
<div class="t" style="right:121.45px;top:7.15px;font-size:20.5px;line-height:20.5px;color:#25256F;letter-spacing:0.15px;">-4</div>
<div class="b" style="left:0;top:32px;width:488.2px;height:32px;background:#EEEDF3;"></div>
<div class="t" style="left:9.20px;top:39.15px;font-size:20.5px;line-height:20.5px;color:#25256F;letter-spacing:0.25px;">2025-08</div>
<div class="t" style="right:121.45px;top:39.15px;font-size:20.5px;line-height:20.5px;color:#25256F;letter-spacing:0.15px;">-8</div>
<div class="b" style="left:0;top:64px;width:488.2px;height:32px;background:#fff;"></div>
<div class="t" style="left:9.20px;top:71.15px;font-size:20.5px;line-height:20.5px;color:#25256F;letter-spacing:0.25px;">2025-09</div>
<div class="t" style="right:121.45px;top:71.15px;font-size:20.5px;line-height:20.5px;color:#25256F;letter-spacing:0.15px;">-40</div>
<div class="b" style="left:0;top:96px;width:488.2px;height:32px;background:#EEEDF3;"></div>
<div class="t" style="left:9.20px;top:103.15px;font-size:20.5px;line-height:20.5px;color:#25256F;letter-spacing:0.25px;">2025-10</div>
<div class="t" style="right:121.45px;top:103.15px;font-size:20.5px;line-height:20.5px;color:#25256F;letter-spacing:0.15px;">-24</div>
<div class="t" style="right:4.55px;top:103.15px;font-size:20.5px;line-height:20.5px;color:#25256F;letter-spacing:0.15px;">40</div>
<div class="b" style="left:0;top:128px;width:488.2px;height:32px;background:#fff;"></div>
<div class="t" style="left:9.20px;top:135.15px;font-size:20.5px;line-height:20.5px;color:#25256F;letter-spacing:0.25px;">2025-11</div>
<div class="t" style="right:121.45px;top:135.15px;font-size:20.5px;line-height:20.5px;color:#25256F;letter-spacing:0.15px;">-12</div>
<div class="b" style="left:0;top:160px;width:488.2px;height:32px;background:#EEEDF3;"></div>
<div class="t" style="left:9.20px;top:167.15px;font-size:20.5px;line-height:20.5px;color:#25256F;letter-spacing:0.25px;">2025-12</div>
<div class="t" style="right:247.45px;top:167.15px;font-size:20.5px;line-height:20.5px;color:#25256F;letter-spacing:0.15px;">120</div>
<div class="t" style="right:121.45px;top:167.15px;font-size:20.5px;line-height:20.5px;color:#25256F;letter-spacing:0.15px;">-12</div>
<div class="b" style="left:0;top:192px;width:488.2px;height:32px;background:#fff;"></div>
<div class="t" style="left:9.20px;top:199.15px;font-size:20.5px;line-height:20.5px;color:#25256F;letter-spacing:0.25px;">2026-01</div>
<div class="t" style="right:247.45px;top:199.15px;font-size:20.5px;line-height:20.5px;color:#25256F;letter-spacing:0.15px;">116</div>
<div class="t" style="right:121.45px;top:199.15px;font-size:20.5px;line-height:20.5px;color:#25256F;letter-spacing:0.15px;">-24</div>
<div class="t" style="right:4.55px;top:199.15px;font-size:20.5px;line-height:20.5px;color:#25256F;letter-spacing:0.15px;">20</div>
<div class="b" style="left:0;top:224px;width:488.2px;height:32px;background:#EEEDF3;"></div>
<div class="t" style="left:9.20px;top:231.15px;font-size:20.5px;line-height:20.5px;color:#25256F;letter-spacing:0.25px;">2026-02</div>
<div class="t" style="right:247.45px;top:231.15px;font-size:20.5px;line-height:20.5px;color:#25256F;letter-spacing:0.15px;">116</div>
<div class="b" style="left:0;top:256px;width:488.2px;height:32px;background:#fff;"></div>
<div class="t" style="left:9.20px;top:263.15px;font-size:20.5px;line-height:20.5px;color:#25256F;letter-spacing:0.25px;">2026-03</div>
<div class="t" style="right:247.45px;top:263.15px;font-size:20.5px;line-height:20.5px;color:#25256F;letter-spacing:0.15px;">52</div>
<div class="t" style="right:121.45px;top:263.15px;font-size:20.5px;line-height:20.5px;color:#25256F;letter-spacing:0.15px;">-80</div>
<div class="t" style="right:4.55px;top:263.15px;font-size:20.5px;line-height:20.5px;color:#25256F;letter-spacing:0.15px;">16</div>
</div>
<div class="b" style="left:1739.8px;top:230px;width:488.2px;height:2px;background:#B29C4E;"></div>
<div class="b" style="left:1866.3px;top:231px;width:1.6px;height:318.5px;background:#C6B577;"></div>
<div class="t" style="top:525.52px;font-size:20.3px;line-height:20.3px;color:#1B1B5E;letter-spacing:0.254px;font-weight:bold;left:1749.00px;">Total</div>
<div class="t" style="top:525.52px;font-size:20.3px;line-height:20.3px;color:#1B1B5E;letter-spacing:0.800px;font-weight:bold;right:289.90px;">0</div>
<div class="t" style="top:525.52px;font-size:20.3px;line-height:20.3px;color:#1B1B5E;letter-spacing:0.800px;font-weight:bold;right:164.00px;">-256</div>
<div class="t" style="top:525.52px;font-size:20.3px;line-height:20.3px;color:#1B1B5E;letter-spacing:0.800px;font-weight:bold;right:47.00px;">76</div>
<div class="b" style="left:1741.5px;top:551.6px;width:261px;height:12.2px;background:#AFAEAC;border-radius:6px;"></div>
<div class="b" style="left:2230.3px;top:130.8px;width:10.4px;height:310px;background:#AFAEAC;border-radius:5px;"></div>
<svg style="left:0;top:0" width="1" height="1">
<path d="M1918.2,9.6 C1915,9.6 1913,11.5 1911.2,14.3 L1888.2,50.5 C1885,55.6 1887.6,60.2 1893.5,60.2 L1940.5,60.2 C1947.5,60.2 1951,55.5 1947.2,49.5 L1925.6,14.5 C1923.6,11.3 1921.4,9.6 1918.2,9.6 Z
M1914.6,21 C1911.5,20.6 1909.2,22.3 1907.9,25.3 L1899.6,46.5 C1897.6,52 1901.5,57.2 1907.2,55.8 L1933.5,49.4 C1938.6,48.1 1940.2,43 1936.6,39 L1920.5,24.5 C1918.6,22.7 1916.8,21.3 1914.6,21 Z" fill="#B29C4E" fill-rule="evenodd"/>
<circle cx="1945.5" cy="19.5" r="6.6" fill="#B29C4E"/></svg>
<div class="t" style="top:17.06px;font-size:36.2px;line-height:36.2px;color:#fff;letter-spacing:-1.565px;font-weight:bold;left:1959.40px;">COSMO</div>
<div class="t" style="left:2090.6px;top:17.40px;font-size:35.2px;line-height:35.2px;color:#fff;font-family:'DejaVu Sans Light','DejaVu Sans',sans-serif;font-weight:200;letter-spacing:-1.7px;">CONSULT</div>
<svg style="left:0;top:0" width="1" height="1"><circle cx="429.1" cy="650.6" r="8.9" fill="#1B2452"/><circle cx="567.6" cy="650.6" r="8.9" fill="#B39D4E"/><circle cx="695.2" cy="650.6" r="8.9" fill="#25256F"/><circle cx="890.9" cy="650.6" r="8.9" fill="#0B7BBF"/><circle cx="1123" cy="650.6" r="8.9" fill="#C3E4B5"/><circle cx="1378.7" cy="650.6" r="8.9" fill="#F50F0F"/><circle cx="1606.3" cy="650.6" r="8.9" fill="#ADE35E"/></svg>
<div class="t" style="top:642.18px;font-size:20.7px;line-height:20.7px;color:#605E5C;letter-spacing:0.091px;left:442.50px;">Demand (-)</div>
<div class="t" style="top:642.18px;font-size:20.7px;line-height:20.7px;color:#605E5C;letter-spacing:0.075px;left:579.80px;">Supply (+)</div>
<div class="t" style="top:642.18px;font-size:20.7px;line-height:20.7px;color:#605E5C;letter-spacing:0.318px;left:707.70px;">OnHand Quantity</div>
<div class="t" style="top:642.18px;font-size:20.7px;line-height:20.7px;color:#605E5C;letter-spacing:-0.318px;left:903.90px;">Exp. OnHand Balance</div>
<div class="t" style="top:642.18px;font-size:20.7px;line-height:20.7px;color:#605E5C;letter-spacing:-0.569px;left:1135.70px;">Exp. Balance (Res. Entry)</div>
<div class="t" style="top:642.18px;font-size:20.7px;line-height:20.7px;color:#605E5C;letter-spacing:0.135px;left:1392.00px;">Safety stock quantity</div>
<div class="t" style="top:642.18px;font-size:20.7px;line-height:20.7px;color:#605E5C;letter-spacing:-0.177px;left:1619.20px;">Reorder Point</div>
<svg style="left:0;top:0" width="2271" height="1278" viewBox="0 0 2271 1278"><line x1="477.4" y1="694" x2="477.4" y2="1138.5" stroke="#C9C9C9" stroke-width="1.5" stroke-dasharray="1.5 7.39"/><line x1="759.3" y1="694" x2="759.3" y2="1138.5" stroke="#C9C9C9" stroke-width="1.5" stroke-dasharray="1.5 7.39"/><line x1="1044.5" y1="694" x2="1044.5" y2="1138.5" stroke="#C9C9C9" stroke-width="1.5" stroke-dasharray="1.5 7.39"/><line x1="1332.6" y1="694" x2="1332.6" y2="1138.5" stroke="#C9C9C9" stroke-width="1.5" stroke-dasharray="1.5 7.39"/><line x1="1620.8" y1="694" x2="1620.8" y2="1138.5" stroke="#C9C9C9" stroke-width="1.5" stroke-dasharray="1.5 7.39"/><line x1="1902.8" y1="694" x2="1902.8" y2="1138.5" stroke="#C9C9C9" stroke-width="1.5" stroke-dasharray="1.5 7.39"/><line x1="477.4" y1="969.8" x2="2184.6" y2="969.8" stroke="#C9C9C9" stroke-width="1.5" stroke-dasharray="1.5 7.39" stroke-dashoffset="3.1"/><line x1="477.4" y1="1138" x2="2184.6" y2="1138" stroke="#C9C9C9" stroke-width="1.5" stroke-dasharray="1.5 7.39" stroke-dashoffset="3.1"/><line x1="477.4" y1="801.6" x2="2184.6" y2="801.6" stroke="#C2C2C2" stroke-width="1.5" stroke-dasharray="10.5 7.28" stroke-dashoffset="4.6"/><line x1="2176" y1="772.3249999999999" x2="2186" y2="772.3249999999999" stroke="#C9C9C9" stroke-width="1.5" stroke-dasharray="1.5 7.39"/><line x1="2176" y1="884.65" x2="2186" y2="884.65" stroke="#C9C9C9" stroke-width="1.5" stroke-dasharray="1.5 7.39"/><line x1="2176" y1="996.9749999999999" x2="2186" y2="996.9749999999999" stroke="#C9C9C9" stroke-width="1.5" stroke-dasharray="1.5 7.39"/><line x1="2176" y1="1109.3" x2="2186" y2="1109.3" stroke="#C9C9C9" stroke-width="1.5" stroke-dasharray="1.5 7.39"/><line x1="1566.6" y1="688.5" x2="1566.6" y2="1138" stroke="#CFCFCF" stroke-width="1.6" stroke-dasharray="8.89 8.89" stroke-dashoffset="-3"/><line x1="1566.8" y1="830.1" x2="2184.6" y2="830.1" stroke="#BEE3AD" stroke-width="1.9"/><line x1="1572" y1="830.1" x2="2184.6" y2="830.1" stroke="#8A8ABA" stroke-width="1.9" stroke-dasharray="8.89 8.89"/><polyline fill="none" stroke="#8787B4" stroke-width="1.6" stroke-linejoin="round" points="570.5,1073.6 696,1073.6 698.8,1082.6 818,1082.6 821,1037.6 864.8,1037.6 868.1,983.3 908.7,983.3 912,938.4 1037,938.4 1040.3,920.4 1153.3,920.4 1156.6,830.1 1566.8,830.1"/><rect x="1104.55" y="800.8" width="3.1" height="7.3" fill="#1B2250"/><rect x="1148.45" y="800.8" width="3.1" height="7.3" fill="#1B2250"/><rect x="1191.95" y="800.8" width="3.1" height="7.3" fill="#1B2250"/><rect x="1235.75" y="800.8" width="3.1" height="14.0" fill="#1B2250"/><rect x="1280.05" y="800.8" width="3.1" height="27.5" fill="#1B2250"/><rect x="1324.05" y="800.8" width="3.1" height="27.5" fill="#1B2250"/><rect x="1368.15" y="800.8" width="3.1" height="27.5" fill="#1B2250"/><rect x="1411.75" y="800.8" width="3.1" height="14.0" fill="#1B2250"/><rect x="1455.75" y="800.8" width="3.1" height="14.0" fill="#1B2250"/><rect x="1498.95" y="800.8" width="3.1" height="7.3" fill="#1B2250"/><rect x="1520.75" y="800.8" width="3.1" height="14.0" fill="#1B2250"/><rect x="1586.95" y="800.8" width="3.1" height="7.3" fill="#1B2250"/><rect x="1661.95" y="800.8" width="3.1" height="34.2" fill="#1B2250"/><rect x="1674.65" y="800.8" width="3.1" height="7.3" fill="#1B2250"/><rect x="1840.55" y="800.8" width="3.1" height="134.9" fill="#1B2250"/><rect x="1937.65" y="800.8" width="3.1" height="7.3" fill="#1B2250"/><rect x="1972.25" y="800.8" width="3.1" height="81.2" fill="#1B2250"/><rect x="1414.9" y="734.2" width="2.8" height="67.2" fill="#B29C4E"/><rect x="1665.4" y="767.8" width="2.8" height="33.6" fill="#B29C4E"/><rect x="1894.2" y="774.5" width="2.8" height="26.9" fill="#B29C4E"/><polyline fill="none" stroke="#0B7BBF" stroke-width="2.1" stroke-dasharray="8.89 8.89" stroke-dashoffset="5.3" points="1584.5,830.1 1591,839 1660.8,839 1663.6,884.6 1666.6,848 1668,839 1672.9,839 1675.3,848.2 1838.7,848.2 1841.7,1028.2 1892.1,1028.2 1895.6,992.2 1936.2,992.2 1939.2,1001.2 1969.3,1001.2 1973.6,1109.3 2184.6,1109.3"/><line x1="476.29999999999995" y1="1041.5" x2="2184.6" y2="1041.5" stroke="#A8E05F" stroke-width="3.15" stroke-dasharray="0.01 8.88" stroke-linecap="round"/><line x1="476.29999999999995" y1="1109.3" x2="2184.6" y2="1109.3" stroke="#FF0D0D" stroke-width="3.15" stroke-dasharray="0.01 8.88" stroke-linecap="round"/><line x1="492" y1="1198.3" x2="2166" y2="1198.3" stroke="#474747" stroke-width="6.8"/><circle cx="492" cy="1198.2" r="11.9" fill="#fff" stroke="#474747" stroke-width="4"/><circle cx="2165.8" cy="1198.2" r="11.9" fill="#fff" stroke="#474747" stroke-width="4"/></svg>
<div class="t" style="top:793.63px;font-size:17.8px;line-height:17.8px;color:#605E5C;letter-spacing:0.550px;right:1812.95px;">0</div>
<div class="t" style="top:961.13px;font-size:17.8px;line-height:17.8px;color:#605E5C;letter-spacing:0.550px;right:1812.95px;">-100</div>
<div class="t" style="top:1129.23px;font-size:17.8px;line-height:17.8px;color:#605E5C;letter-spacing:0.550px;right:1812.95px;">-200</div>
<div class="t" style="top:764.36px;font-size:17.8px;line-height:17.8px;color:#605E5C;letter-spacing:0.550px;left:2202.60px;">150</div>
<div class="t" style="top:876.68px;font-size:17.8px;line-height:17.8px;color:#605E5C;letter-spacing:0.550px;left:2202.60px;">100</div>
<div class="t" style="top:989.01px;font-size:17.8px;line-height:17.8px;color:#605E5C;letter-spacing:0.550px;left:2202.60px;">50</div>
<div class="t" style="top:1101.33px;font-size:17.8px;line-height:17.8px;color:#605E5C;letter-spacing:0.550px;left:2202.60px;">0</div>
<div class="t" style="top:1148.53px;font-size:17.8px;line-height:17.8px;color:#605E5C;letter-spacing:-0.200px;left:-522.70px;width:2000px;text-align:center;">Jan 2025</div>
<div class="t" style="top:1148.53px;font-size:17.8px;line-height:17.8px;color:#605E5C;letter-spacing:-0.200px;left:-240.80px;width:2000px;text-align:center;">Apr 2025</div>
<div class="t" style="top:1148.53px;font-size:17.8px;line-height:17.8px;color:#605E5C;letter-spacing:-0.200px;left:44.40px;width:2000px;text-align:center;">Jul 2025</div>
<div class="t" style="top:1148.53px;font-size:17.8px;line-height:17.8px;color:#605E5C;letter-spacing:-0.200px;left:332.50px;width:2000px;text-align:center;">Oct 2025</div>
<div class="t" style="top:1148.53px;font-size:17.8px;line-height:17.8px;color:#605E5C;letter-spacing:-0.200px;left:620.70px;width:2000px;text-align:center;">Jan 2026</div>
<div class="t" style="top:1148.53px;font-size:17.8px;line-height:17.8px;color:#605E5C;letter-spacing:-0.200px;left:902.70px;width:2000px;text-align:center;">Apr 2026</div>
<div class="t" style="top:1110.56px;font-size:18px;line-height:18px;color:#BDBDBD;letter-spacing:0.601px;left:1582.00px;">12/15/2025</div>
<div class="b" style="left:0px;top:1226px;width:2271px;height:12.7px;background:#B29C4E;"></div>
<div class="t" style="top:1246.62px;font-size:20.3px;line-height:20.3px;color:#1B2252;letter-spacing:0.247px;left:133.80px;-webkit-text-stroke:0.55px #1B2252;">Today: 12/15/2025</div>
<div class="t" style="top:1246.22px;font-size:20.3px;line-height:20.3px;color:#1B2252;letter-spacing:0.643px;left:963.30px;-webkit-text-stroke:0.55px #1B2252;">analytics.demo@cosmoconsult.com</div>
<div class="t" style="top:1246.62px;font-size:20.3px;line-height:20.3px;color:#1B2252;letter-spacing:0.106px;left:1890.30px;-webkit-text-stroke:0.55px #1B2252;">Last Refresh: 12/15/2025</div>
<svg style="left:0;top:0" width="1" height="1"><g fill="none" stroke="#4A4A4A" stroke-width="2">
<circle cx="2204.6" cy="1255.5" r="12.2" stroke-width="1.8"/><circle cx="2250.7" cy="1255.5" r="12.2" stroke-width="1.8"/>
<path d="M8.5,1259.5 L24.5,1243.8 L33.5,1252.8 L17.5,1268.6 Z M14,1254 L23,1263" stroke-width="2.4"/></g></svg>
<div class="t" style="top:1246.77px;font-size:20px;line-height:20px;color:#4A4A4A;letter-spacing:0.000px;left:1204.80px;width:2000px;text-align:center;">?</div>
<div class="t" style="top:1249.08px;font-size:16.8px;line-height:16.8px;color:#4A4A4A;letter-spacing:0.000px;left:1250.90px;width:2000px;text-align:center;">i</div>
</body></html>
